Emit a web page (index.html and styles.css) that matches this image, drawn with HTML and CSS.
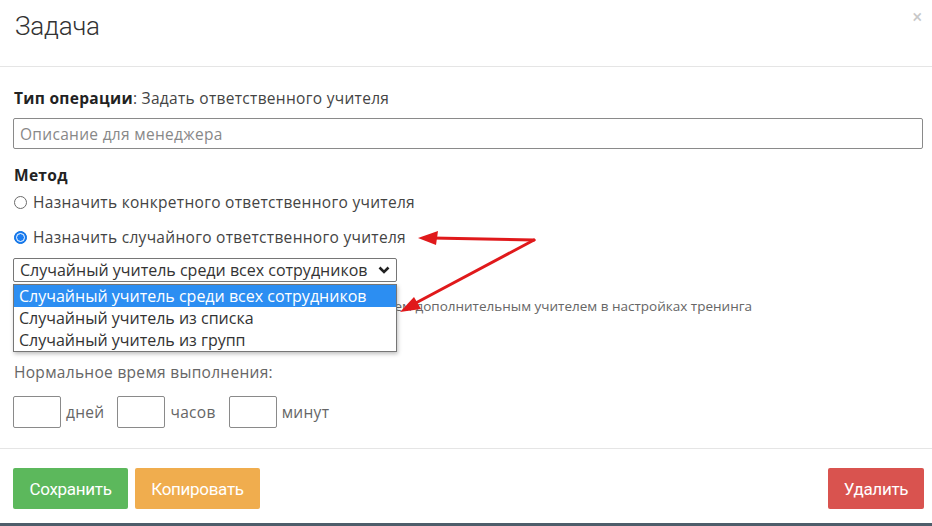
FILE: index.html
```html
<!DOCTYPE html>
<html>
<head>
  <meta charset="utf-8">
  <title>Задача</title>
  <link rel="stylesheet" href="styles.css">
</head>
<body>
  <div class="modal">
    <div class="modal-header">
      <h1>Задача</h1>
      <span class="close">&times;</span>
    </div>

    <div class="modal-body">
      <div class="op-type"><b>Тип операции</b>: Задать ответственного учителя</div>
      <input class="descr" type="text" placeholder="Описание для менеджера">

      <div class="section-title">Метод</div>
      <label class="radio-row first"><span class="radio"></span>Назначить конкретного ответственного учителя</label>
      <label class="radio-row second"><span class="radio checked"></span>Назначить случайного ответственного учителя</label>

      <div class="select-wrap">
        <div class="select">
          <span>Случайный учитель среди всех сотрудников</span>
          <svg class="chevron" width="12" height="8" viewBox="0 0 12 8"><path d="M1.5 1.5 L6 6 L10.5 1.5" fill="none" stroke="#222" stroke-width="2.6"/></svg>
        </div>
        <ul class="options">
          <li class="active">Случайный учитель среди всех сотрудников</li>
          <li>Случайный учитель из списка</li>
          <li>Случайный учитель из групп</li>
        </ul>
      </div>

      <div class="note">Учитель выбирается из сотрудников, отмеченных учителем дополнительным учителем в настройках тренинга</div>

      <div class="time-title">Нормальное время выполнения:</div>
      <div class="time-row">
        <input class="num" type="text"><span>дней</span>
        <input class="num" type="text"><span>часов</span>
        <input class="num" type="text"><span>минут</span>
      </div>
    </div>

    <div class="modal-footer">
      <button class="btn green">Сохранить</button>
      <button class="btn orange">Копировать</button>
      <button class="btn red right">Удалить</button>
    </div>
  </div>

  <!-- annotation arrows -->
  <svg class="arrows" width="932" height="526" viewBox="0 0 932 526">
    <g stroke="#e0191b" stroke-width="3" fill="none" stroke-linecap="round">
      <path d="M534 240 L432 238"/>
      <path d="M534 240 L412 305"/>
    </g>
    <g fill="#e0191b">
      <path d="M418 238 L438 231 L436 245 Z"/>
      <path d="M400 312 L414 297 L421 309 Z"/>
    </g>
  </svg>
</body>
</html>
```

FILE: styles.css
```css
body {
  margin: 0;
  font-family: "Open Sans", Arial, sans-serif;
  color: #333;
  background: #fff;
}

.modal {
  width: 932px;
  height: 523px;
  border-bottom: 3px solid #4e5d6a;
  display: flex;
  flex-direction: column;
}

.modal-header {
  height: 66px;
  border-bottom: 1px solid #e5e5e5;
  display: flex;
  justify-content: space-between;
  padding: 0 10px 0 15px;
}

.modal-header h1 {
  margin: 0;
  padding-top: 10px;
  font-family: Roboto, sans-serif;
  font-weight: 300;
  font-size: 26px;
  line-height: 32px;
  color: #333;
  letter-spacing: -0.2px;
}

.close {
  font-family: Roboto, sans-serif;
  font-size: 18px;
  color: #c8c8c8;
  padding-top: 6px;
}

.modal-body {
  position: relative;
  padding: 21px 9px 20px 13px;
  border-bottom: 1px solid #e5e5e5;
  font-size: 15.5px;
  letter-spacing: 0.3px;
}

.op-type {
  line-height: 20px;
  padding-left: 1px;
  color: #444;
}

.op-type b {
  color: #222;
  font-weight: 700;
}

.descr {
  display: block;
  margin-top: 10px;
  width: 100%;
  height: 31px;
  box-sizing: border-box;
  border: 1px solid #8a8a8a;
  border-radius: 2px;
  padding: 0 6px;
  font-family: "Open Sans", Arial, sans-serif;
  font-size: 15.5px;
  letter-spacing: 0.3px;
}

.descr::placeholder {
  color: #888;
}

.section-title {
  margin-top: 16px;
  line-height: 20px;
  font-weight: 700;
  color: #222;
  padding-left: 1px;
}

.radio-row {
  display: flex;
  align-items: center;
  line-height: 20px;
  color: #444;
  padding-left: 1px;
}

.radio-row.first {
  margin-top: 7px;
}

.radio-row.second {
  margin-top: 15px;
}

.radio {
  width: 11px;
  height: 11px;
  border: 1px solid #6b6b6b;
  border-radius: 50%;
  margin-right: 6px;
  flex: none;
}

.radio.checked {
  border: 1px solid #0a6fe0;
  background: #1a7df2;
  position: relative;
}

.radio.checked::after {
  content: "";
  position: absolute;
  inset: 1px;
  border-radius: 50%;
  border: 1px solid #fff;
  background: #1a7df2;
  box-sizing: border-box;
}

.select-wrap {
  position: relative;
  margin-top: 11px;
  width: 384px;
  letter-spacing: 0;
}

.select {
  height: 24px;
  box-sizing: border-box;
  border: 1px solid #767676;
  border-radius: 2px;
  display: flex;
  align-items: center;
  justify-content: space-between;
  padding: 0 6px 0 6px;
  font-size: 16px;
  color: #333;
}

.chevron {
  flex: none;
}

.options {
  position: absolute;
  top: 26px;
  left: 0;
  width: 384px;
  margin: 0;
  padding: 0;
  list-style: none;
  background: #fff;
  border: 1px solid #767676;
  box-sizing: border-box;
  box-shadow: 1px 2px 4px rgba(0, 0, 0, 0.25);
  z-index: 2;
  font-size: 16px;
  color: #333;
}

.options li {
  height: 22px;
  line-height: 22px;
  padding-left: 5px;
}

.options li.active {
  background: #2c8ef2;
  color: #fff;
}

.note {
  margin-top: 15px;
  line-height: 18px;
  font-size: 13.5px;
  letter-spacing: 0;
  color: #666;
  white-space: nowrap;
  padding-left: 1px;
}

.time-title {
  margin-top: 47px;
  line-height: 20px;
  color: #666;
  padding-left: 1px;
}

.time-row {
  margin-top: 14px;
  display: flex;
  align-items: center;
  color: #666;
}

.num {
  width: 48px;
  height: 32px;
  box-sizing: border-box;
  border: 1px solid #8a8a8a;
  border-radius: 2px;
  margin: 0 5px 0 0;
}

.time-row span {
  margin-right: 13px;
}

.modal-footer {
  flex: 1;
  display: flex;
  align-items: flex-start;
  gap: 7px;
  padding: 19px 8px 0 13px;
}

.btn {
  height: 41px;
  border: none;
  border-radius: 2px;
  color: #fff;
  font-family: Roboto, sans-serif;
  font-size: 17px;
  letter-spacing: -0.3px;
  cursor: pointer;
}

.btn.green {
  width: 115px;
  background: #5cb85c;
}

.btn.orange {
  width: 125px;
  background: #f0ad4e;
}

.btn.red {
  width: 96px;
  background: #d9534f;
}

.btn.right {
  margin-left: auto;
}

.arrows {
  position: absolute;
  left: 0;
  top: 0;
  pointer-events: none;
  z-index: 5;
}
```
